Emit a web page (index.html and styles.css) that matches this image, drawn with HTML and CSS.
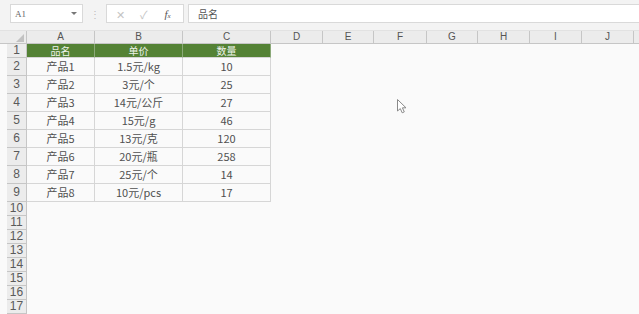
FILE: index.html
```html
<!DOCTYPE html>
<html lang="zh-CN">
<head>
    <meta charset="UTF-8">
    <title>Sheet1</title>
    <link rel="stylesheet" href="styles.css">
</head>
<body>
    <div class="app">
        <div class="toolbar">
            <div class="namebox"><span>A1</span><span class="caret"></span></div>
            <div class="grip">⋮</div>
            <div class="fnbox">
                <span class="cancel">✕</span>
                <span class="enter">✓</span>
                <span class="fx"><i>f</i><small>x</small></span>
            </div>
            <div class="formula">品名</div>
        </div>

        <div class="sheet">
            <div class="row colhead">
                <div class="corner"><span class="tri"></span></div>
                <div>A</div><div>B</div><div>C</div><div>D</div><div>E</div>
                <div>F</div><div>G</div><div>H</div><div>I</div><div>J</div><div></div>
            </div>

            <div class="row r-title">
                <div class="rh">1</div>
                <div class="c head">品名</div><div class="c head">单价</div><div class="c head">数量</div>
            </div>
            <div class="row r-data"><div class="rh">2</div><div class="c">产品1</div><div class="c">1.5元/kg</div><div class="c">10</div></div>
            <div class="row r-data"><div class="rh">3</div><div class="c">产品2</div><div class="c">3元/个</div><div class="c">25</div></div>
            <div class="row r-data"><div class="rh">4</div><div class="c">产品3</div><div class="c">14元/公斤</div><div class="c">27</div></div>
            <div class="row r-data"><div class="rh">5</div><div class="c">产品4</div><div class="c">15元/g</div><div class="c">46</div></div>
            <div class="row r-data"><div class="rh">6</div><div class="c">产品5</div><div class="c">13元/克</div><div class="c">120</div></div>
            <div class="row r-data"><div class="rh">7</div><div class="c">产品6</div><div class="c">20元/瓶</div><div class="c">258</div></div>
            <div class="row r-data"><div class="rh">8</div><div class="c">产品7</div><div class="c">25元/个</div><div class="c">14</div></div>
            <div class="row r-data"><div class="rh">9</div><div class="c">产品8</div><div class="c">10元/pcs</div><div class="c">17</div></div>

            <div class="row r-empty"><div class="rh">10</div></div>
            <div class="row r-empty"><div class="rh">11</div></div>
            <div class="row r-empty"><div class="rh">12</div></div>
            <div class="row r-empty"><div class="rh">13</div></div>
            <div class="row r-empty"><div class="rh">14</div></div>
            <div class="row r-empty"><div class="rh">15</div></div>
            <div class="row r-empty"><div class="rh">16</div></div>
            <div class="row r-empty"><div class="rh">17</div></div>
        </div>

        <!-- mouse pointer over the sheet -->
        <svg class="pointer" width="12" height="16" viewBox="0 0 12 16">
            <path d="M0.5 0.5 L0.5 12 L3.3 9.6 L5.2 13.8 L7.3 12.9 L5.4 8.8 L9 8.8 Z" fill="#fff" stroke="#8a8a8a" stroke-width="1" stroke-linejoin="round"/>
        </svg>
    </div>
</body>
</html>
```

FILE: styles.css
```css
:root {
    --bar: #f3f3f3;
    --head: #ececec;
    --line: #d6d6d6;
    --head-line: #c6c6c6;
    --green: #548235;
    --text: #505050;
}

* {
    margin: 0;
    padding: 0;
    box-sizing: border-box;
}

body {
    background: #fafafa;
    font-family: "Noto Sans CJK SC", "Noto Sans", sans-serif;
    color: var(--text);
    overflow: hidden;
}

.app {
    position: relative;
    width: 639px;
    height: 314px;
}

/* formula bar */
.toolbar {
    height: 31px;
    background: var(--bar);
    display: flex;
    align-items: flex-start;
    padding: 4px 0 0 10px;
    border-bottom: 1px solid #e2e2e2;
}

.namebox {
    width: 73px;
    height: 19px;
    background: #fff;
    border: 1px solid #d9d9d9;
    display: flex;
    align-items: center;
    justify-content: space-between;
    padding: 0 4px 0 4px;
    font-family: "Liberation Serif", serif;
    font-size: 9px;
    color: #666;
}

.caret {
    width: 0;
    height: 0;
    border-left: 3px solid transparent;
    border-right: 3px solid transparent;
    border-top: 3px solid #777;
    margin-right: 1px;
}

.grip {
    width: 23px;
    text-align: center;
    font-size: 10px;
    line-height: 19px;
    color: #bbb;
}

.fnbox {
    width: 78px;
    height: 19px;
    background: #fff;
    border: 1px solid #d9d9d9;
    display: flex;
    align-items: center;
    padding-left: 9px;
    gap: 15px;
    font-size: 11px;
    color: #c4c4c4;
}

.fnbox .fx {
    font-family: "Liberation Serif", serif;
    color: #555;
    font-size: 11px;
    margin-left: 2px;
}

.fnbox .fx small {
    font-size: 7px;
    font-style: italic;
}

.formula {
    flex: 1;
    height: 19px;
    margin-left: 4px;
    background: #fff;
    border: 1px solid #d9d9d9;
    border-right: none;
    padding-left: 9px;
    font-size: 10px;
    line-height: 17px;
    color: #555;
}

/* grid */
.sheet {
    padding-left: 7px;
}

.row {
    display: grid;
    grid-template-columns: 20px 68px 88px 88px 52px 51px 53px 51px 52px 52px 52px 1fr;
}

.colhead {
    height: 13px;
    background: var(--head);
    border-bottom: 1px solid var(--head-line);
    margin-left: -7px;
    padding-left: 7px;
    font-family: "Liberation Sans", sans-serif;
    font-size: 10px;
    line-height: 12px;
    text-align: center;
    color: #555;
}

.colhead > div {
    border-right: 1px solid var(--head-line);
}

.colhead > div:last-child {
    border-right: none;
}

.corner {
    position: relative;
}

.tri {
    position: absolute;
    right: 2px;
    bottom: 1px;
    width: 0;
    height: 0;
    border-left: 8px solid transparent;
    border-bottom: 8px solid #c2c2c2;
}

.rh {
    background: var(--head);
    border-right: 1px solid var(--head-line);
    border-bottom: 1px solid var(--head-line);
    text-align: center;
    font-family: "Liberation Sans", sans-serif;
    font-size: 12px;
    color: #5a5a5a;
}

.c {
    border-right: 1px solid var(--line);
    border-bottom: 1px solid var(--line);
    text-align: center;
    font-size: 11px;
}

.r-title {
    height: 14px;
}

.r-title .rh {
    line-height: 13px;
}

.c.head {
    background: var(--green);
    color: #eef3ea;
    font-size: 10px;
    line-height: 13px;
    border-right-color: #8aa877;
    border-bottom-color: #d6d6d6;
}

.r-data {
    height: 18px;
}

.r-data > div {
    line-height: 17px;
}

.r-empty {
    height: 14px;
}

.r-empty .rh {
    line-height: 13px;
}

.pointer {
    position: absolute;
    left: 397px;
    top: 99px;
}
```
